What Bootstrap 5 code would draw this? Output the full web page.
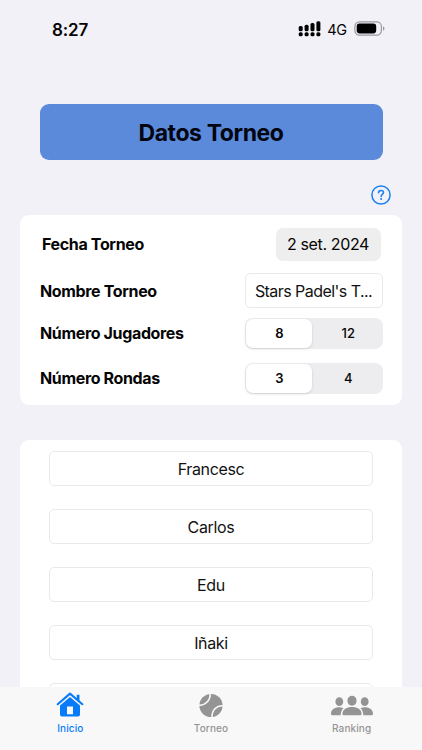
<!DOCTYPE html>
<html lang="es">
<head>
<meta charset="utf-8">
<meta name="viewport" content="width=device-width, initial-scale=1">
<title>Datos Torneo</title>
<link href="https://cdn.jsdelivr.net/npm/bootstrap@5.3.0/dist/css/bootstrap.min.css" rel="stylesheet">
<style>
  body { font-family: Inter, "Liberation Sans", sans-serif; background: #f2f1f8; color: #050505; }
  .screen { width: 422px; height: 750px; }
  .status-bar { height: 58px; padding: 0 37px 0 52px; }
  .clock { font-size: 17px; font-weight: 600; letter-spacing: -.1px; padding-top: 3px; }
  .carrier { font-size: 14.5px; letter-spacing: -.2px; margin: 1px 7px 0 6px; }
  .page-title { height: 56px; margin: 46px 39.5px 0; padding-top: 3px; border-radius: 9px; background: #5b8adb; font-size: 23px; font-weight: 700; letter-spacing: -.4px; color: #020510; }
  .help { height: 55px; padding: 25px 31px 0 0; color: #1b7ff0; }
  .panel { margin: 0 20px; border-radius: 9px; }
  .form-panel { height: 189.5px; padding: 13px 19.5px 0 20px; }
  .field { font-size: 16px; letter-spacing: -.35px; }
  .field label { font-weight: 700; padding-bottom: 1px; }
  .field .fecha { padding-left: 2px; }
  .name-row { margin-top: 12px; }
  .name-row label { padding-bottom: 0; }
  .players-row { margin-top: 10px; }
  .rounds-row { margin-top: 14px; }
  .date-pill { width: 105px; height: 33px; margin-right: 2px; padding-bottom: 1px; border-radius: 7px; background: #eeeeef; }
  .text-box { height: 35px; border: 1px solid #e9e9eb; border-radius: 5px; font-size: 16px; letter-spacing: -.35px; color: #111; }
  .name-box { width: 138px; letter-spacing: -.55px; }
  .segments { width: 137.5px; height: 31px; border-radius: 8px; background: #ededef; padding: 1px; font-size: 13px; letter-spacing: 0; }
  .segments .on { width: 66px; padding: 1px 0 0 1px; background: #fff; border-radius: 7px; font-weight: 600; box-shadow: 0 1px 3px #0002; }
  .segments .off { padding: 1px 0 0 3px; font-weight: 500; }
  .players { margin-top: 35.5px; padding: 11.4px 29px 0; gap: 23px; height: 247px; }
  .tabs { height: 63px; background: #f8f8f9; color: #949494; font-size: 10px; font-weight: 500; letter-spacing: .1px; }
  .tabs .current { color: #087cf8; }
  .tab-label { line-height: 12px; margin-top: 2px; }
</style>
</head>
<body>
<div class="screen d-flex flex-column overflow-hidden">
  <header class="status-bar d-flex align-items-center flex-shrink-0">
    <span class="clock me-auto">8:27</span>
    <svg width="23" height="16" viewBox="0 0 23 16" fill="#000"><rect x="0.7" y="5" width="4" height="5.2" rx="1.5"/><rect x="6.6" y="3.8" width="4" height="6.4" rx="1.5"/><rect x="12.5" y="2" width="4" height="8.2" rx="1.5"/><rect x="18.4" y="0.3" width="4" height="9.9" rx="1.5"/><rect x="0.7" y="11.2" width="4" height="4" rx="1.5"/><rect x="6.6" y="11.2" width="4" height="4" rx="1.5"/><rect x="12.5" y="11.2" width="4" height="4" rx="1.5"/><rect x="18.4" y="11.2" width="4" height="4" rx="1.5"/></svg>
    <span class="carrier">4G</span>
    <svg width="31" height="16" viewBox="0 0 31 16"><rect x=".9" y=".8" width="26.5" height="13.4" rx="4.6" fill="none" stroke="#99999d" stroke-width="1.2"/><rect x="2.7" y="2.6" width="19.5" height="9.8" rx="2.8" fill="#000"/><path d="M29 5.3c2 .8 2 3.6 0 4.4z" fill="#99999d"/></svg>
  </header>
  <h1 class="page-title mb-0 d-flex align-items-center justify-content-center flex-shrink-0">Datos Torneo</h1>
  <div class="help d-flex justify-content-end flex-shrink-0">
    <svg width="20" height="20" viewBox="0 0 20 20" fill="none" stroke="currentColor" stroke-width="1.5"><circle cx="10" cy="10" r="9.1"/><path d="M7.5 7.7c0-1.5 1.1-2.3 2.5-2.3s2.5.9 2.5 2.1c0 1.8-2.4 1.9-2.4 4" stroke-linecap="round"/><circle cx="10.1" cy="14" r="1" fill="currentColor" stroke="none"/></svg>
  </div>
  <section class="panel form-panel bg-white flex-shrink-0">
    <div class="field d-flex align-items-center justify-content-between"><label class="fecha">Fecha Torneo</label><span class="date-pill d-flex align-items-center justify-content-center">2 set. 2024</span></div>
    <div class="field name-row d-flex align-items-center justify-content-between"><label>Nombre Torneo</label><span class="text-box name-box d-flex align-items-center justify-content-center">Stars Padel's T...</span></div>
    <div class="field players-row d-flex align-items-center justify-content-between"><label>Número Jugadores</label>
      <div class="segments d-flex"><span class="on d-flex align-items-center justify-content-center">8</span><span class="off flex-fill d-flex align-items-center justify-content-center">12</span></div></div>
    <div class="field rounds-row d-flex align-items-center justify-content-between"><label>Número Rondas</label>
      <div class="segments d-flex"><span class="on d-flex align-items-center justify-content-center">3</span><span class="off flex-fill d-flex align-items-center justify-content-center">4</span></div></div>
  </section>
  <section class="panel players bg-white d-flex flex-column overflow-hidden flex-shrink-0 rounded-bottom-0">
    <div class="text-box d-flex align-items-center justify-content-center flex-shrink-0">Francesc</div>
    <div class="text-box d-flex align-items-center justify-content-center flex-shrink-0">Carlos</div>
    <div class="text-box d-flex align-items-center justify-content-center flex-shrink-0">Edu</div>
    <div class="text-box d-flex align-items-center justify-content-center flex-shrink-0">Iñaki</div>
    <div class="text-box flex-shrink-0"></div>
  </section>
  <nav class="tabs row g-0 text-center flex-shrink-0">
    <div class="col current d-flex flex-column align-items-center">
      <svg class="mt-1" width="28" height="29" viewBox="0 0 28 29" fill="currentColor"><path d="M1.7 13.2 14 2.6 26.3 13.2" fill="none" stroke="currentColor" stroke-width="2.1" stroke-linecap="round" stroke-linejoin="round"/><path d="M20.7 3.7h2.8v7.2l-2.8-2.4z"/><path fill-rule="evenodd" d="M14 6 24 14.5V23.5a2 2 0 0 1-2 2H6a2 2 0 0 1-2-2V14.5zM11 15.5v7.7h6v-7.7z"/></svg>
      <span class="tab-label">Inicio</span>
    </div>
    <div class="col d-flex flex-column align-items-center">
      <svg class="mt-1" width="28" height="29" viewBox="0 0 28 29"><circle cx="14" cy="14.5" r="11.6" fill="currentColor"/><path d="M1.5 14.2C8 15 14 9 13.1 2M26.5 14.9C20 14 14.3 19 15.1 27" fill="none" stroke="#f8f8f9" stroke-width="1.5"/></svg>
      <span class="tab-label">Torneo</span>
    </div>
    <div class="col d-flex flex-column align-items-center">
      <svg class="mt-1" width="44" height="29" viewBox="0 0 44 29" fill="currentColor"><ellipse cx="9.3" cy="10.7" rx="3.9" ry="4.4"/><ellipse cx="34.7" cy="10.7" rx="3.9" ry="4.4"/><path d="M1 22.7c0-4.2 3.7-6.4 8.2-6.4 1.6 0 3 .3 4.3.9-1.8 1.6-2.7 3.5-2.8 7H2.4c-.8 0-1.4-.7-1.4-1.5zM43 22.7c0-4.2-3.7-6.4-8.2-6.4-1.6 0-3 .3-4.3.9 1.8 1.6 2.7 3.5 2.8 7h8.3c.8 0 1.4-.7 1.4-1.5z"/><ellipse cx="22" cy="9.8" rx="4.6" ry="5"/><path d="M12.4 22.8c0-4.6 4.4-6.9 9.6-6.9s9.6 2.3 9.6 6.9c0 .9-.6 1.5-1.5 1.5H13.9c-.9 0-1.5-.6-1.5-1.5z"/></svg>
      <span class="tab-label">Ranking</span>
    </div>
  </nav>
</div>
<script src="https://cdn.jsdelivr.net/npm/bootstrap@5.3.0/dist/js/bootstrap.bundle.min.js"></script>
</body>
</html>
